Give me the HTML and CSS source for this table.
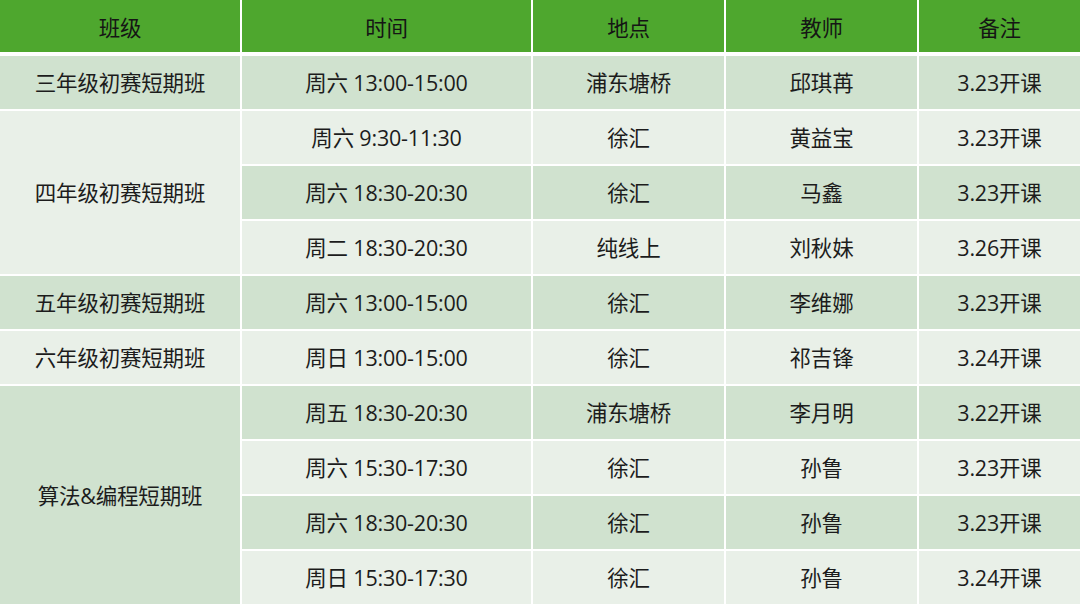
FILE: index.html
```html
<!DOCTYPE html>
<html lang="zh-CN">
<head>
<meta charset="utf-8">
<title>短期班安排</title>
<link rel="stylesheet" href="styles.css">
</head>
<body>
<div class="schedule">
  <div class="cell head">班级</div>
  <div class="cell head">时间</div>
  <div class="cell head">地点</div>
  <div class="cell head">教师</div>
  <div class="cell head">备注</div>

  <div class="cell dark">三年级初赛短期班</div>
  <div class="cell dark">周六 13:00-15:00</div>
  <div class="cell dark">浦东塘桥</div>
  <div class="cell dark">邱琪苒</div>
  <div class="cell dark">3.23开课</div>

  <div class="cell light span3">四年级初赛短期班</div>
  <div class="cell light">周六 9:30-11:30</div>
  <div class="cell light">徐汇</div>
  <div class="cell light">黄益宝</div>
  <div class="cell light">3.23开课</div>

  <div class="cell dark">周六 18:30-20:30</div>
  <div class="cell dark">徐汇</div>
  <div class="cell dark">马鑫</div>
  <div class="cell dark">3.23开课</div>

  <div class="cell light">周二 18:30-20:30</div>
  <div class="cell light">纯线上</div>
  <div class="cell light">刘秋妹</div>
  <div class="cell light">3.26开课</div>

  <div class="cell dark">五年级初赛短期班</div>
  <div class="cell dark">周六 13:00-15:00</div>
  <div class="cell dark">徐汇</div>
  <div class="cell dark">李维娜</div>
  <div class="cell dark">3.23开课</div>

  <div class="cell light">六年级初赛短期班</div>
  <div class="cell light">周日 13:00-15:00</div>
  <div class="cell light">徐汇</div>
  <div class="cell light">祁吉锋</div>
  <div class="cell light">3.24开课</div>

  <div class="cell dark span4">算法&amp;编程短期班</div>
  <div class="cell dark">周五 18:30-20:30</div>
  <div class="cell dark">浦东塘桥</div>
  <div class="cell dark">李月明</div>
  <div class="cell dark">3.22开课</div>

  <div class="cell light">周六 15:30-17:30</div>
  <div class="cell light">徐汇</div>
  <div class="cell light">孙鲁</div>
  <div class="cell light">3.23开课</div>

  <div class="cell dark">周六 18:30-20:30</div>
  <div class="cell dark">徐汇</div>
  <div class="cell dark">孙鲁</div>
  <div class="cell dark">3.23开课</div>

  <div class="cell light">周日 15:30-17:30</div>
  <div class="cell light">徐汇</div>
  <div class="cell light">孙鲁</div>
  <div class="cell light">3.24开课</div>
</div>
</body>
</html>
```
FILE: styles.css
```css
html, body {
  margin: 0;
  padding: 0;
  background: #ffffff;
}

.schedule {
  width: 1080px;
  height: 604px;
  display: grid;
  grid-template-columns: 240px 289px 191px 191px 161px;
  grid-template-rows: 54px repeat(10, 53px);
  gap: 2px;
  background: #ffffff;
  overflow: hidden;
  font-family: "Open Sans", "Noto Sans CJK SC", sans-serif;
  font-size: 21.5px;
  color: #1c1c1c;
}

.cell {
  display: flex;
  align-items: center;
  justify-content: center;
  white-space: nowrap;
  padding-bottom: 2px;
  letter-spacing: -0.2px;
}

.head {
  background: #4ea72e;
  margin-bottom: 2px;
  padding-bottom: 0;
  color: #151515;
}

.dark {
  background: #d0e2cf;
}

.light {
  background: #e9f0e8;
}

.span3 {
  grid-row: span 3;
}

.span4 {
  grid-row: span 4;
}
```
